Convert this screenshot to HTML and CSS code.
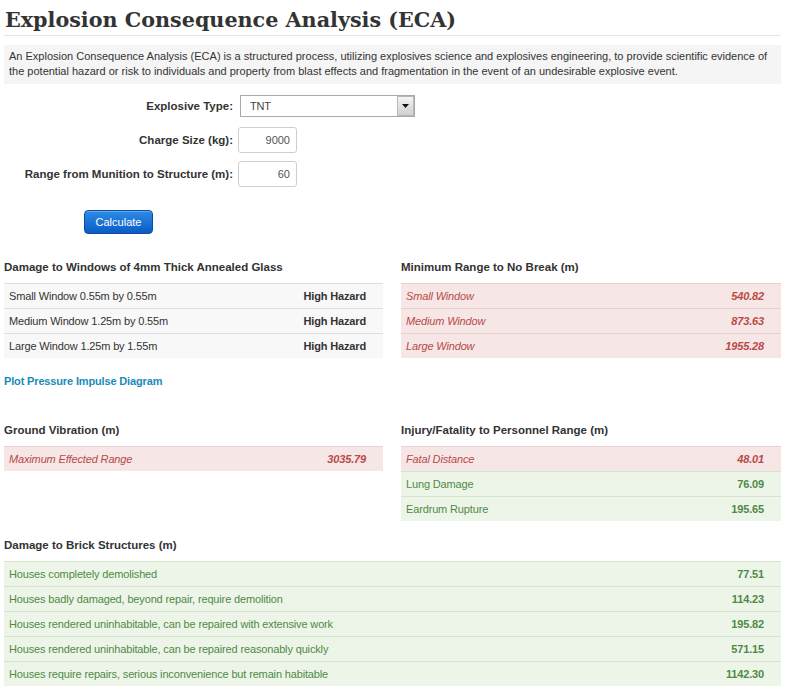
FILE: index.html
```html
<!DOCTYPE html>
<html lang="en">
<head>
<meta charset="utf-8">
<title>Explosion Consequence Analysis (ECA)</title>
<link rel="stylesheet" href="styles.css">
</head>
<body>
<div class="page">
  <h1 class="title">Explosion Consequence Analysis (ECA)</h1>
  <p class="intro">An Explosion Consequence Analysis (ECA) is a structured process, utilizing explosives science and explosives engineering, to provide scientific evidence of the potential hazard or risk to individuals and property from blast effects and fragmentation in the event of an undesirable explosive event.</p>

  <form class="calc">
    <div class="field">
      <label class="field-label">Explosive Type:</label>
      <div class="select">
        <span class="select-value">TNT</span>
        <span class="select-arrow"><svg width="7" height="4" viewBox="0 0 7 4"><path d="M0 0h7L3.5 4z" fill="#111"/></svg></span>
      </div>
    </div>
    <div class="field">
      <label class="field-label">Charge Size (kg):</label>
      <input class="num" type="text" value="9000">
    </div>
    <div class="field">
      <label class="field-label">Range from Munition to Structure (m):</label>
      <input class="num" type="text" value="60">
    </div>
    <div class="actions">
      <button type="button" class="btn">Calculate</button>
    </div>
  </form>

  <div class="results">
    <section class="panel">
      <h2 class="panel-title">Damage to Windows of 4mm Thick Annealed Glass</h2>
      <div class="table">
        <div class="row tone-neutral"><span>Small Window 0.55m by 0.55m</span><span class="row-value">High Hazard</span></div>
        <div class="row tone-neutral"><span>Medium Window 1.25m by 0.55m</span><span class="row-value">High Hazard</span></div>
        <div class="row tone-neutral"><span>Large Window 1.25m by 1.55m</span><span class="row-value">High Hazard</span></div>
      </div>
      <a class="plot-link" href="#">Plot Pressure Impulse Diagram</a>
    </section>

    <section class="panel">
      <h2 class="panel-title">Minimum Range to No Break (m)</h2>
      <div class="table">
        <div class="row tone-danger"><span>Small Window</span><span class="row-value">540.82</span></div>
        <div class="row tone-danger"><span>Medium Window</span><span class="row-value">873.63</span></div>
        <div class="row tone-danger"><span>Large Window</span><span class="row-value">1955.28</span></div>
      </div>
    </section>

    <section class="panel">
      <h2 class="panel-title">Ground Vibration (m)</h2>
      <div class="table">
        <div class="row tone-danger"><span>Maximum Effected Range</span><span class="row-value">3035.79</span></div>
      </div>
    </section>

    <section class="panel">
      <h2 class="panel-title">Injury/Fatality to Personnel Range (m)</h2>
      <div class="table">
        <div class="row tone-danger"><span>Fatal Distance</span><span class="row-value">48.01</span></div>
        <div class="row tone-success"><span>Lung Damage</span><span class="row-value">76.09</span></div>
        <div class="row tone-success"><span>Eardrum Rupture</span><span class="row-value">195.65</span></div>
      </div>
    </section>

    <section class="panel panel-wide">
      <h2 class="panel-title">Damage to Brick Structures (m)</h2>
      <div class="table">
        <div class="row tone-success"><span>Houses completely demolished</span><span class="row-value">77.51</span></div>
        <div class="row tone-success"><span>Houses badly damaged, beyond repair, require demolition</span><span class="row-value">114.23</span></div>
        <div class="row tone-success"><span>Houses rendered uninhabitable, can be repaired with extensive work</span><span class="row-value">195.82</span></div>
        <div class="row tone-success"><span>Houses rendered uninhabitable, can be repaired reasonably quickly</span><span class="row-value">571.15</span></div>
        <div class="row tone-success"><span>Houses require repairs, serious inconvenience but remain habitable</span><span class="row-value">1142.30</span></div>
      </div>
    </section>
  </div>
</div>
</body>
</html>
```

FILE: styles.css
```css
* {
  box-sizing: border-box;
}

body {
  margin: 0;
  background: #fff;
  color: #333;
  font-family: "Liberation Sans", Arial, sans-serif;
  font-size: 11px;
  letter-spacing: -0.15px;
}

.page {
  width: 777px;
  margin-left: 4px;
}

.title {
  margin: 0;
  padding: 5px 0 0 1px;
  font-family: "DejaVu Serif", Georgia, serif;
  font-weight: bold;
  font-size: 20.7px;
  line-height: 30px;
  letter-spacing: 0;
  color: #333;
  border-bottom: 1px solid #e6e6e6;
}

.intro {
  margin: 9px 0 0;
  padding: 4px 5px 5px;
  background: #f5f5f5;
  line-height: 15px;
  letter-spacing: 0;
}

.calc {
  margin-top: 9px;
}

.field {
  display: flex;
  align-items: center;
  height: 26px;
  margin-bottom: 8px;
}

.field-label {
  width: 234px;
  padding-right: 5px;
  text-align: right;
  font-size: 11.5px;
  font-weight: bold;
  letter-spacing: 0;
  color: #333;
}

.select {
  display: flex;
  width: 175px;
  height: 22px;
  margin-left: 2px;
  border: 1px solid #a9a9a9;
  background: #fff;
}

.select-value {
  flex: 1;
  padding-left: 9px;
  line-height: 20px;
  color: #444;
}

.select-arrow {
  display: flex;
  align-items: center;
  justify-content: center;
  width: 17px;
  border: 1px solid #b8b8b8;
  background: linear-gradient(#f4f4f4, #cfcfcf);
}

.num {
  width: 59px;
  height: 26px;
  padding: 0 6px;
  border: 1px solid #cfcfcf;
  border-radius: 3px;
  text-align: right;
  font-family: "Liberation Sans", Arial, sans-serif;
  font-size: 11px;
  color: #555;
  background: #fff;
}

.actions {
  padding: 15px 0 0 80px;
}

.btn {
  width: 69px;
  height: 24px;
  padding: 0;
  border: 1px solid #0c4fa4;
  border-radius: 4px;
  background: linear-gradient(#2d8be6, #0b5bc6);
  box-shadow: inset 0 1px 0 rgba(255, 255, 255, 0.25);
  color: #fff;
  font-family: "Liberation Sans", Arial, sans-serif;
  font-size: 11px;
}

.results {
  display: grid;
  grid-template-columns: 379px 380px;
  column-gap: 18px;
  row-gap: 16px;
  margin-top: 25px;
}

.panel-wide {
  grid-column: 1 / -1;
}

.panel-title {
  margin: 0 0 8px;
  font-size: 11.5px;
  font-weight: bold;
  line-height: 16px;
  letter-spacing: 0;
  color: #333;
}

.row {
  display: flex;
  justify-content: space-between;
  padding: 5px 17px 5px 5px;
  line-height: 14px;
  border-top: 1px solid #dedede;
}

.row-value {
  font-weight: bold;
}

.tone-neutral {
  background: #f8f8f8;
  color: #333;
}

.tone-danger {
  background: #f6e6e6;
  border-top-color: #e8d0d0;
  color: #b94a48;
  font-style: italic;
}

.tone-success {
  background: #edf5e8;
  border-top-color: #d5e4cc;
  color: #4f8a45;
}

.plot-link {
  display: block;
  margin: 15px 0 17px;
  font-weight: bold;
  line-height: 16px;
  color: #1a8bb8;
  text-decoration: none;
}
```
